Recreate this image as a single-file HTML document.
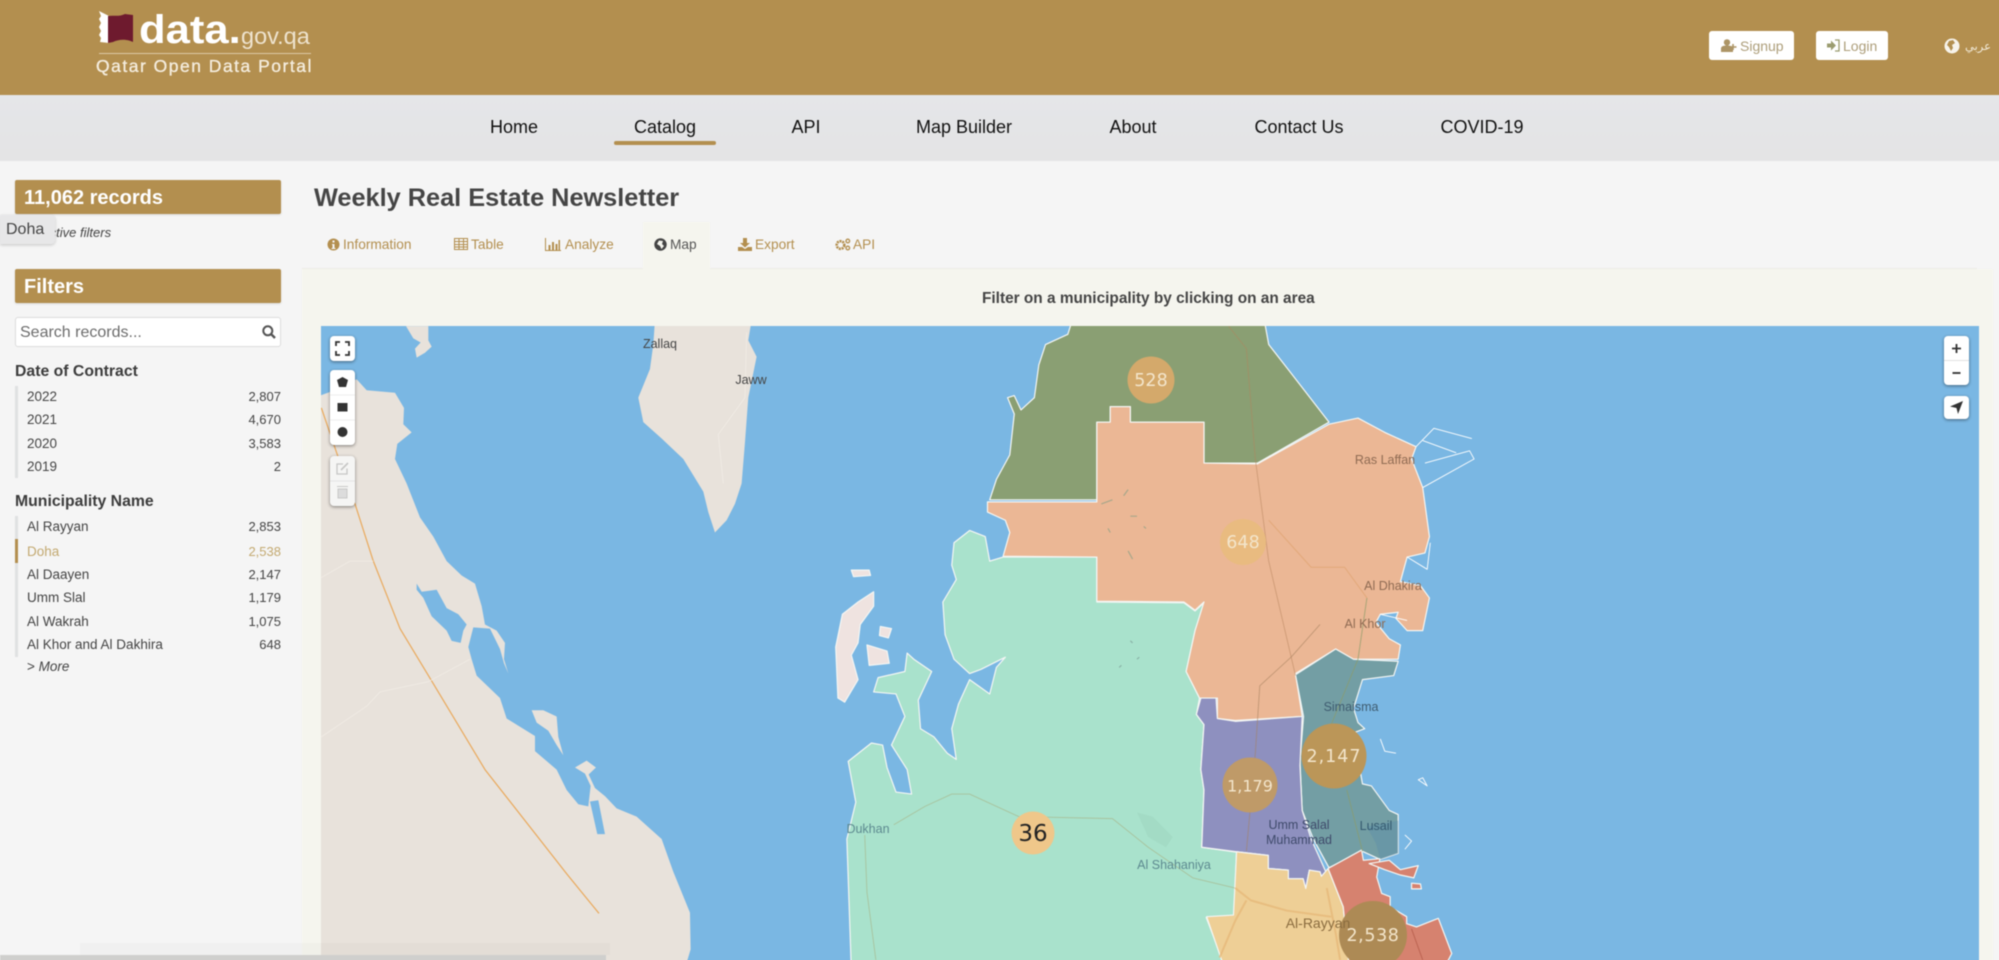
<!DOCTYPE html>
<html lang="en">
<head>
<meta charset="utf-8">
<title>Weekly Real Estate Newsletter</title>
<style>
html,body{margin:0;padding:0;width:1999px;height:960px;overflow:hidden;background:#f5f5f5;font-family:"Liberation Sans","Noto Sans CJK SC",sans-serif;color:#444}
.a{position:absolute;white-space:nowrap;line-height:1}
#clip{position:absolute;left:0;top:0;width:1999px;height:960px;overflow:hidden;contain:paint}
#page{position:absolute;left:0;top:0;width:1999px;height:960px;filter:blur(.5px)}
.hdr{position:absolute;left:-6px;top:-6px;width:2011px;height:101px;background:#b38f4f}
.nav{position:absolute;left:-6px;top:95px;width:2011px;height:66px;background:linear-gradient(#e5e6e9,#e4e4e5)}
.nv{position:absolute;top:118px;font-size:18px;line-height:18px;color:#111;transform:translateX(-50%);white-space:nowrap}
.box{position:absolute;left:15px;width:266px;height:34px;background:#b38f4f;border-radius:2px;color:#fff;font-weight:bold;font-size:20px;line-height:36px;text-indent:9px;box-shadow:0 1px 2px rgba(0,0,0,.12)}
.btn{position:absolute;top:31px;height:29px;background:#fff;border-radius:3px;color:#ad9a6f;font-size:14px;line-height:29px}
.h{position:absolute;left:15px;font-size:15.8px;font-weight:bold;color:#3c3c3c;line-height:18px;white-space:nowrap}
.it{position:absolute;left:15px;width:266px;height:18px;font-size:13.5px;line-height:18px;color:#444}
.it span{position:absolute;left:12px;white-space:nowrap}
.it b{position:absolute;right:0;font-weight:normal;font-size:13px}
.bar{position:absolute;left:15px;width:3px;background:#e0e1e2}
.tab{position:absolute;top:238px;font-size:13.7px;line-height:14px;color:#b38f4f;white-space:nowrap}
.ctl{position:absolute;background:#fff;border-radius:4px;box-shadow:0 1px 3px rgba(0,0,0,.45)}
svg{display:block}
</style>
</head>
<body>
<div id="clip">
<div id="page">
  <div class="hdr"></div>
  <!-- logo -->
  <svg class="a" style="left:97px;top:10px" width="40" height="36" viewBox="0 0 40 36">
    <path d="M2 1 L12 6 L12 33 L3 32 L4 28 L2 25 L4 21 L2 17 L4 13 L2 9 L4 6Z" fill="#fff"/>
    <path d="M11 6 C16 5 22 7 28 4 L36 5 L36 32 C30 29 22 29 16 32 L11 33Z" fill="#6e1a2e"/>
  </svg>
  <div class="a" style="left:139px;top:8px;font-size:40px;font-weight:bold;color:#fff;line-height:44px;transform:scaleX(1.09);transform-origin:0 0">data.</div>
  <div class="a" style="left:241px;top:23px;font-size:23.5px;color:#eee3ce;line-height:26px">gov.qa</div>
  <div class="a" style="left:99px;top:53px;width:212px;height:1px;background:#dcc9a6"></div>
  <div class="a" style="left:96px;top:57px;font-size:17.5px;font-weight:normal;color:#f4ecdd;line-height:18px;letter-spacing:1.5px;-webkit-text-stroke:.35px #f4ecdd">Qatar Open Data Portal</div>

  <div class="btn" style="left:1709px;width:85px">
    <svg class="a" style="left:12px;top:8px" width="16" height="13" viewBox="0 0 16 13"><circle cx="6" cy="3.4" r="3.2" fill="#ad9566"/><path d="M0 13V9.5C0 7.5 2 6.5 6 6.5S12 7.5 12 9.500V13Z" fill="#ad9566"/><path d="M12 5v6M9.500 8h6" stroke="#ad9566" stroke-width="1.600"/></svg>
    <span class="a" style="left:31px;top:8px;font-size:14px;color:#ad9e7a">Signup</span>
  </div>
  <div class="btn" style="left:1816px;width:72px">
    <svg class="a" style="left:11px;top:8px" width="13" height="13" viewBox="0 0 13 13"><path d="M0 4.500H4V1.500L9 6.500 4 11.500V8.500H0Z" fill="#9b9c70"/><path d="M8 1H12V12H8" fill="none" stroke="#9b9c70" stroke-width="1.300"/></svg>
    <span class="a" style="left:27px;top:8px;font-size:14px;color:#ad9e7a">Login</span>
  </div>
  <svg class="a" style="left:1944px;top:38px" width="16" height="16" viewBox="0 0 16 16"><circle cx="8" cy="8" r="7.500" fill="#f7f3ea"/><path d="M5 3 L9 2 L11 5 L8 7 L9 10 L7 13 L5 9 L3 7Z" fill="#b38f4f"/></svg>
  <div class="a" style="left:1965px;top:41px;font-size:11.5px;color:#f2ead8;font-family:'DejaVu Sans',sans-serif">عربي</div>

  <div class="nav"></div>
  <div class="nv" style="left:514px">Home</div>
  <div class="nv" style="left:665px">Catalog</div>
  <div class="nv" style="left:806px">API</div>
  <div class="nv" style="left:964px">Map Builder</div>
  <div class="nv" style="left:1133px">About</div>
  <div class="nv" style="left:1299px">Contact Us</div>
  <div class="nv" style="left:1482px">COVID-19</div>
  <div class="a" style="left:614px;top:141px;width:102px;height:4px;background:#b38f4f;border-radius:2px"></div>

  <!-- sidebar -->
  <div class="box" style="top:180px">11,062 records</div>
  <div class="a" style="left:41px;top:226px;font-size:13px;font-style:italic;color:#444">Active filters</div>
  <div class="a" style="left:0;top:215px;width:55px;height:29px;background:#e7e7e8;border-radius:0 4px 4px 0;box-shadow:0 1px 3px rgba(0,0,0,.2);font-size:16px;line-height:30px;color:#444;text-indent:6px">Doha</div>
  <div class="box" style="top:269px;line-height:37px">Filters</div>
  <div class="a" style="left:15px;top:317px;width:264px;height:28px;background:#fff;border:1px solid #dcdcdc;border-radius:3px;font-size:16px;line-height:30px;color:#6d6d6d;text-indent:4px">Search records...</div>
  <svg class="a" style="left:262px;top:325px" width="14" height="14" viewBox="0 0 14 14"><circle cx="5.800" cy="5.800" r="4.500" fill="none" stroke="#555" stroke-width="2"/><path d="M9 9L13 13" stroke="#555" stroke-width="2.300"/></svg>

  <div class="h" style="top:363px">Date of Contract</div>
  <div class="bar" style="top:386px;height:92px"></div>
  <div class="it" style="top:388px"><span>2022</span><b>2,807</b></div>
  <div class="it" style="top:411px"><span>2021</span><b>4,670</b></div>
  <div class="it" style="top:435px"><span>2020</span><b>3,583</b></div>
  <div class="it" style="top:458px"><span>2019</span><b>2</b></div>

  <div class="h" style="top:493px">Municipality Name</div>
  <div class="bar" style="top:516px;height:141px"></div>
  <div class="bar" style="top:539px;height:24px;background:#b38f4f"></div>
  <div class="it" style="top:518px"><span>Al Rayyan</span><b>2,853</b></div>
  <div class="it" style="top:543px;color:#c3a970"><span>Doha</span><b>2,538</b></div>
  <div class="it" style="top:566px"><span>Al Daayen</span><b>2,147</b></div>
  <div class="it" style="top:589px"><span>Umm Slal</span><b>1,179</b></div>
  <div class="it" style="top:613px"><span>Al Wakrah</span><b>1,075</b></div>
  <div class="it" style="top:636px"><span>Al Khor and Al Dakhira</span><b>648</b></div>
  <div class="it" style="top:658px"><span>&gt; <i>More</i></span></div>

  <!-- title and tabs -->
  <div class="a" style="left:314px;top:183px;font-size:25.300px;font-weight:bold;color:#454545;line-height:30px">Weekly Real Estate Newsletter</div>
  <div class="a" style="left:302px;top:268px;width:1675px;height:1px;background:#ecebe6"></div>
  <div class="a" style="left:643px;top:222px;width:67px;height:47px;background:#f5f5ee"></div>
  <div class="a" style="left:302px;top:269px;width:1691px;height:697px;background:#f5f5ee"></div>

  <svg class="a" style="left:327px;top:238px" width="13" height="13" viewBox="0 0 13 13"><circle cx="6.500" cy="6.500" r="6" fill="#b38f4f"/><path d="M5.500 2.500h2v2h-2zM5 6h2.500v4H8.500v1h-4v-1H5.500V7H5z" fill="#f5f5f5"/></svg>
  <div class="tab" style="left:343px">Information</div>
  <svg class="a" style="left:454px;top:238px" width="14" height="12" viewBox="0 0 14 12"><path d="M.5.500h13v11H.5zM.5 3.500h13M.5 6.500h13M.5 9h13M5 .5v11M9.500.5v11" fill="none" stroke="#b38f4f" stroke-width="1"/></svg>
  <div class="tab" style="left:471px">Table</div>
  <svg class="a" style="left:545px;top:238px" width="16" height="13" viewBox="0 0 16 13"><path d="M.5 0V12.500H16" fill="none" stroke="#b38f4f" stroke-width="1"/><path d="M3.500 7h2v5h-2zM7 4h2v8H7zM10.500 6h2v6h-2zM13.500 2h1.500v10h-1.500z" fill="#b38f4f"/></svg>
  <div class="tab" style="left:565px">Analyze</div>
  <svg class="a" style="left:654px;top:238px" width="13" height="13" viewBox="0 0 13 13"><circle cx="6.500" cy="6.500" r="6.200" fill="#444"/><path d="M5 2.500 L9 3 L8 6 L10 8 L7.500 11 L6 8 L3 6Z" fill="#f5f5ee"/></svg>
  <div class="tab" style="left:670px;color:#555">Map</div>
  <svg class="a" style="left:738px;top:238px" width="14" height="13" viewBox="0 0 14 13"><path d="M5 0h4v5h3L7 9.500 2 5h3z" fill="#b38f4f"/><path d="M0 9h4l3 2 3-2h4v4H0z" fill="#b38f4f"/></svg>
  <div class="tab" style="left:755px">Export</div>
  <svg class="a" style="left:835px;top:238px" width="16" height="13" viewBox="0 0 16 13"><circle cx="5.500" cy="7" r="3.800" fill="none" stroke="#b38f4f" stroke-width="2.600" stroke-dasharray="2 .8"/><circle cx="12.800" cy="3" r="1.800" fill="none" stroke="#b38f4f" stroke-width="1.300"/><circle cx="12.800" cy="10" r="1.800" fill="none" stroke="#b38f4f" stroke-width="1.300"/></svg>
  <div class="tab" style="left:853px">API</div>

  <div class="a" style="left:982px;top:291px;font-size:15.400px;font-weight:bold;color:#454545;line-height:16px">Filter on a municipality by clicking on an area</div>

  <!-- map -->
  <svg class="a" style="left:0;top:0" width="1999" height="966" viewBox="0 0 1999 966">
    <defs><clipPath id="mc"><rect x="321" y="326" width="1658" height="640"/></clipPath></defs>
    <g clip-path="url(#mc)">
      <rect x="321" y="326" width="1658" height="640" fill="#7ab7e3"/>
      <!-- west land, Bahrain -->
      <g transform="translate(300 320) scale(.3333 .4087)">
        <path fill="#e8e2db" d="M60 185 L110 170 170 145 200 172 285 178 312 215 310 255 335 275 292 303 285 340 320 400 360 483 400 530 440 590 485 625 525 645 545 700 555 745 590 760 615 790 612 830 625 865 612 840 600 805 570 755 520 752 505 800 515 830 530 870 600 925 620 975 705 1018 705 1055 770 1100 800 1150 835 1185 865 1190 872 1140 855 1110 825 1095 860 1078 888 1095 866 1112 885 1145 915 1165 950 1195 1010 1215 1085 1270 1120 1350 1170 1450 1172 1540 1150 1600 60 1600Z"/>
        <path fill="#7ab7e3" d="M350 645 L365 665 410 660 440 705 475 720 500 745 490 760 482 790 455 785 440 760 395 725 370 680 350 660Z"/>
        <path fill="#7ab7e3" d="M870 1178 L895 1175 915 1258 892 1258Z"/>
        <path fill="#e8e2db" d="M695 955 L730 955 770 970 775 1020 790 1065 770 1040 745 1005 710 985Z"/>
        <path fill="#e8e2db" d="M318 15 L385 15 385 50 395 65 375 80 350 92 345 70 362 55 340 45Z"/>
        <path fill="#e8e2db" d="M1065 0 L1355 0 1345 50 1370 90 1345 190 1335 300 1325 400 1305 450 1280 490 1245 520 1225 470 1210 420 1150 340 1085 290 1030 250 1015 190 1050 120 1060 60Z"/>
        <g fill="none" stroke-linejoin="round">
          <path d="M64 215 L110 325 165 450 220 590 300 755 400 890 555 1100 800 1355 897 1452" stroke="#e9a95c" stroke-width="1.200" vector-effect="non-scaling-stroke"/>
          <path d="M64 630 L150 590 220 590M64 1020 L200 945 240 910 385 885 510 830M1340 30 L1335 190 1255 280 1270 400" stroke="#f1ece5" stroke-width=".8" vector-effect="non-scaling-stroke"/>
        </g>
      </g>
      <!-- Qatar -->
      <g transform="translate(800 320) scale(.4464 .4087)" stroke="#f4f6f4" stroke-width="1.200" stroke-linejoin="round">
        <path vector-effect="non-scaling-stroke" fill="#efe3e0" d="M165 665 L165 700 135 745 130 790 115 820 130 880 100 935 85 925 80 800 95 720 130 690Z"/>
        <path vector-effect="non-scaling-stroke" fill="#efe3e0" d="M150 795 L195 810 200 840 155 845ZM180 750 L205 755 198 778 178 772ZM115 612 L155 612 158 625 120 628Z"/>
        <path vector-effect="non-scaling-stroke" fill="#a9e2cc" d="M455 580 L665 580 665 690 860 692 885 712 905 692 885 760 865 860 895 925 888 965 905 990 898 1100 905 1150 900 1290 978 1302 972 1458 910 1462 955 1590 115 1590 105 1270 125 1180 108 1080 160 1035 185 1040 195 1095 215 1155 250 1160 240 1100 205 1040 235 970 215 915 165 910 175 875 235 860 240 815 255 830 295 860 265 930 270 1000 300 1020 330 1060 350 1075 340 1000 355 940 380 880 425 915 440 850 460 825 405 855 380 865 345 830 325 770 320 690 350 635 340 600 345 545 380 515 415 530 425 590Z"/>
        <path vector-effect="non-scaling-stroke" fill="#8a9f73" d="M610 0 L1040 0 1050 60 1100 130 1185 250 1025 350 905 350 905 250 740 250 740 212 695 212 695 250 665 250 665 440 425 440 440 390 470 330 480 230 465 190 480 185 495 220 525 190 535 110 550 60 600 35Z"/>
        <path vector-effect="non-scaling-stroke" fill="#ebb795" d="M420 445 L665 445 665 250 695 250 695 212 740 212 740 250 905 250 905 350 1025 352 1185 255 1250 240 1310 275 1380 310 1370 340 1395 410 1410 530 1400 570 1360 580 1345 640 1390 650 1410 680 1395 760 1360 760 1335 730 1340 715 1300 720 1290 740 1320 780 1345 795 1340 830 1240 830 1200 805 1110 865 1125 970 975 980 935 975 935 925 895 925 865 860 885 760 905 690 885 710 860 690 665 688 665 580 455 578 470 520 460 490 420 470Z"/>
        <path vector-effect="non-scaling-stroke" fill="#739ea4" d="M1110 868 L1200 805 1240 830 1340 835 1330 870 1260 880 1240 950 1250 985 1265 1000 1240 1010 1260 1135 1280 1140 1320 1200 1340 1210 1340 1305 1300 1320 1260 1300 1185 1340 1150 1270 1125 1200 1120 1080 1128 970Z"/>
        <path vector-effect="non-scaling-stroke" fill="#8e90bf" d="M898 925 L932 925 935 975 975 982 1125 970 1120 1090 1125 1200 1145 1270 1182 1360 1168 1361 1141 1346 1133 1391 1127 1367 1094 1367 1094 1346 1049 1342 1049 1310 978 1301 900 1290 905 1150 898 1100 905 990 888 965Z"/>
        <path vector-effect="non-scaling-stroke" fill="#eecf96" d="M978 1301 L1049 1310 1049 1342 1094 1346 1094 1367 1127 1367 1133 1391 1141 1346 1165 1350 1168 1361 1183 1342 1217 1436 1231 1590 952 1590 911 1460 971 1456Z"/>
        <path vector-effect="non-scaling-stroke" fill="#d6826f" d="M1183 1342 L1258 1297 1262 1322 1299 1318 1292 1363 1303 1403 1322 1411 1322 1436 1359 1460 1359 1477 1381 1485 1430 1464 1460 1550 1441 1590 1231 1590 1217 1436Z"/>
        <path vector-effect="non-scaling-stroke" fill="#d6826f" d="M1275 1330 L1320 1322 1345 1345 1385 1335 1375 1365 1345 1358 1310 1345ZM1370 1378 L1390 1380 1392 1392 1370 1392Z"/>
        <path fill="#5f8fa8" stroke="none" d="M1270 1240 L1340 1225 1340 1305 1300 1320 1290 1280Z" opacity=".5"/>
        <g fill="none">
          <path vector-effect="non-scaling-stroke" d="M1380 310 L1420 265 1505 290M1395 410 L1510 340 1500 320 1400 350M1395 295 L1470 325M1360 580 L1405 610 1412 545M1300 720 L1360 735M1300 1025 L1310 1055 1335 1060M1385 1125 L1405 1140 1395 1120ZM1355 1260 L1370 1275 1355 1295" stroke="#fff" stroke-width=".9"/>
          <path vector-effect="non-scaling-stroke" d="M960 15 L1000 70 1020 340 1050 590 1110 870" stroke="#b5835c" stroke-width=".9" opacity=".55"/>
          <path vector-effect="non-scaling-stroke" d="M1165 745 L1100 825 1030 895 1020 1060 1000 1300" stroke="#a5805e" stroke-width=".9" opacity=".6"/>
          <path vector-effect="non-scaling-stroke" d="M1270 680 L1250 830 1190 990M1225 1150 L1260 1300" stroke="#8d9c6a" stroke-width="1" opacity=".7"/>
          <path vector-effect="non-scaling-stroke" d="M1050 490 L1145 605 1220 605 1270 680" stroke="#dfa36f" stroke-width="1" opacity=".7"/>
          <path vector-effect="non-scaling-stroke" d="M145 1260 L150 1400 170 1566M210 1235 L280 1190 340 1160 380 1160 490 1215 700 1220 780 1290 880 1365 975 1390" stroke="#a8a978" stroke-width=".9" opacity=".55"/>
          <path vector-effect="non-scaling-stroke" d="M975 1390 L1010 1420 1090 1445 1190 1460M940 1560 L975 1470 1000 1420M1180 1390 L1200 1500 1210 1566" stroke="#e6b878" stroke-width="2" opacity=".75"/>
          <path vector-effect="non-scaling-stroke" d="M1370 1490 L1395 1566" stroke="#b9614f" stroke-width=".9"/>
          <path vector-effect="non-scaling-stroke" d="M675 450 L700 440M735 415 L725 430M735 565 L745 585M690 510 L695 520M740 480 L755 480M770 505 L775 510" stroke="#a8a78a" stroke-width="1.200"/>
          <path vector-effect="non-scaling-stroke" d="M740 785 L745 790M760 825 L755 830M720 845 L715 850" stroke="#8ab3a7" stroke-width="1.200"/>
        </g>
        <path fill="#97cdb7" stroke="none" opacity=".35" d="M755 1205 L790 1215 835 1265 820 1290 780 1265Z"/>
      </g>

      <!-- clusters -->
      <g font-family="'DejaVu Sans',sans-serif" text-anchor="middle" dominant-baseline="central" fill="#f3e5cb" font-size="17.500">
        <circle cx="1151" cy="380" r="23.500" fill="#d4a96b"/>
        <text x="1151" y="381">528</text>
        <circle cx="1243" cy="542" r="23" fill="#e9bb80"/>
        <text x="1243" y="543">648</text>
        <circle cx="1334" cy="756" r="32.500" fill="#bb9658"/>
        <text x="1334" y="757" letter-spacing="1">2,147</text>
        <circle cx="1250" cy="785" r="27.500" fill="#bf9a68"/>
        <text x="1250" y="786" font-size="16">1,179</text>
        <circle cx="1033" cy="833" r="21.500" fill="#efc78a"/>
        <text x="1033" y="834" font-size="23" fill="#232323">36</text>
        <circle cx="1373" cy="935" r="34" fill="#ad8a55"/>
        <text x="1373" y="936" letter-spacing=".6">2,538</text>
      </g>

      <!-- map labels -->
      <g font-family="'Liberation Sans',sans-serif" font-size="12.500" text-anchor="middle" dominant-baseline="central">
        <text x="660" y="344" fill="#444">Zallaq</text>
        <text x="751" y="380" fill="#444">Jaww</text>
        <text x="1385" y="460" fill="#8f6b53">Ras Laffan</text>
        <text x="1393" y="586" fill="#8f6b53">Al Dhakira</text>
        <text x="1365" y="624" fill="#8f6b53">Al Khor</text>
        <text x="1351" y="707" fill="#3f5c70">Simaisma</text>
        <text x="1299" y="825" fill="#3f4a6b">Umm Salal</text>
        <text x="1299" y="840" fill="#3f4a6b">Muhammad</text>
        <text x="1376" y="826" fill="#355a70">Lusail</text>
        <text x="1174" y="865" fill="#5d8a90">Al Shahaniya</text>
        <text x="868" y="829" fill="#5d8a90">Dukhan</text>
        <text x="1318" y="923" fill="#8a6c3f" font-size="14">Al-Rayyan</text>
      </g>
    </g>
    <!-- bottom overlay -->
    <rect x="80" y="943" width="530" height="12" fill="#000" opacity=".02"/>
    <rect x="0" y="955" width="606" height="11" fill="#cfcfcd"/>
  </svg>

  <!-- map controls -->
  <div class="ctl" style="left:330px;top:336px;width:25px;height:25px">
    <svg style="position:absolute;left:5px;top:5px" width="15" height="15" viewBox="0 0 15 15"><path d="M1 5V1H5M10 1H14V5M14 10V14H10M5 14H1V10" fill="none" stroke="#333" stroke-width="1.800"/></svg>
  </div>
  <div class="ctl" style="left:330px;top:370px;width:25px;height:75px">
    <svg style="position:absolute;left:0;top:0" width="25" height="75" viewBox="0 0 25 75"><path d="M7 10 L12.500 7 18 10 16 17 9 17Z" fill="#333"/><path d="M7.500 33h10v8.500h-10z" fill="#333"/><circle cx="12.500" cy="62" r="5" fill="#333"/><path d="M0 25H25M0 50H25" stroke="#eee" stroke-width="1"/></svg>
  </div>
  <div class="ctl" style="left:330px;top:456px;width:25px;height:50px;background:#f5f5f4">
    <svg style="position:absolute;left:0;top:0" width="25" height="50" viewBox="0 0 25 50"><path d="M17 12.500V18H7V8H13" fill="none" stroke="#c6c6c6" stroke-width="1.300"/><path d="M11 14 L18 7" stroke="#c6c6c6" stroke-width="1.600"/><path d="M8 33h9v9H8zM7 30.500h11" fill="#dcdcdc" stroke="#c8c8c8" stroke-width="1"/><path d="M0 25H25" stroke="#e4e4e4"/></svg>
  </div>
  <div class="ctl" style="left:1944px;top:336px;width:25px;height:49px">
    <svg style="position:absolute;left:0;top:0" width="25" height="49" viewBox="0 0 25 49"><path d="M12.500 8v9M8 12.500h9" stroke="#333" stroke-width="1.800"/><path d="M8.500 37h8" stroke="#333" stroke-width="1.800"/><path d="M0 24.500H25" stroke="#e2e2e2"/></svg>
  </div>
  <div class="ctl" style="left:1944px;top:396px;width:25px;height:23px">
    <svg style="position:absolute;left:5px;top:4px" width="15" height="15" viewBox="0 0 15 15"><path d="M14 1 L1 6.500 7.500 8 9 14Z" fill="#333"/></svg>
  </div>
</div>
</div>
</body>
</html>
